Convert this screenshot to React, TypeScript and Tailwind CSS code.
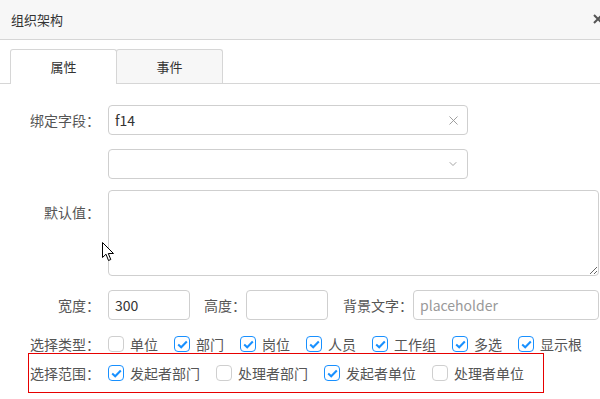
import { X, ChevronDown } from "lucide-react";

const font = { fontFamily: '"Noto Sans CJK SC", "Microsoft YaHei", sans-serif' };

function Check({ label, checked }: { label: string; checked?: boolean }) {
	return (
		<label className="flex items-center mr-[16px] text-[14px] text-[#555] whitespace-nowrap">
			<span
				className={
					checked
						? "w-[16px] h-[16px] rounded-[4px] border border-[#1890ff] flex items-center justify-center bg-white"
						: "w-[16px] h-[16px] rounded-[4px] border border-[#cfcfcf] bg-white"
				}>
				{checked && (
					<svg width="11" height="9" viewBox="0 0 11 9">
						<path d="M1.2 4.5 L4.2 7.3 L9.8 1.5" fill="none" stroke="#1890ff" strokeWidth="2" />
					</svg>
				)}
			</span>
			<span className="ml-[6px] leading-none">{label}</span>
		</label>
	);
}

export default function App() {
	return (
		<div className="relative w-[600px] h-[399px] bg-white overflow-hidden" style={font}>
			{/* header */}
			<div className="h-[40px] bg-[#f7f7f7] border-b border-[#d6d6d6] flex items-center pl-[11px]">
				<span className="text-[13px] text-[#333]">组织架构</span>
			</div>
			<svg className="absolute left-[593px] top-[14px]" width="10" height="10" viewBox="0 0 10 10">
				<path d="M1 1 L9 9 M9 1 L1 9" stroke="#555" strokeWidth="2" />
			</svg>

			{/* tabs */}
			<div className="pt-[9px] pl-[10px] border-b border-[#d6d6d6] flex">
				<div className="w-[107px] h-[35px] -mb-px bg-white border border-b-0 border-[#d6d6d6] rounded-t-[3px] flex items-center justify-center text-[13px] text-[#333]">
					属性
				</div>
				<div className="w-[107px] h-[34px] -ml-px bg-[#f7f7f7] border border-b-0 border-[#d6d6d6] rounded-t-[3px] flex items-center justify-center text-[13px] text-[#333]">
					事件
				</div>
			</div>

			{/* form */}
			<div className="flex flex-col pt-[21px]">
				<div className="flex items-center">
					<span className="w-[100px] text-right text-[14px] text-[#555]">绑定字段：</span>
					<div className="ml-[8px] w-[360px] h-[30px] border border-[#cfcfcf] rounded-[4px] flex items-center px-[6px]">
						<span className="flex-1 text-[14px] text-[#333]">f14</span>
						<X size={15} color="#999" strokeWidth={1.5} />
					</div>
				</div>

				<div className="flex items-center mt-[14px]">
					<div className="ml-[108px] w-[360px] h-[30px] border border-[#cfcfcf] rounded-[4px] flex items-center justify-end px-[8px]">
						<ChevronDown size={12} color="#999" strokeWidth={1.8} />
					</div>
				</div>

				<div className="flex items-start mt-[11px]">
					<span className="w-[100px] text-right text-[14px] text-[#555] mt-[12px]">默认值：</span>
					<textarea
						readOnly
						className="ml-[8px] w-[491px] h-[86px] border border-[#cfcfcf] rounded-[4px] outline-none"
					/>
				</div>

				<div className="flex items-center mt-[14px]">
					<span className="w-[100px] text-right text-[14px] text-[#555]">宽度：</span>
					<div className="ml-[8px] w-[82px] h-[30px] border border-[#cfcfcf] rounded-[4px] flex items-center px-[6px] text-[14px] text-[#333]">
						300
					</div>
					<span className="ml-[14px] text-[14px] text-[#555]">高度：</span>
					<div className="w-[82px] h-[30px] border border-[#cfcfcf] rounded-[4px]" />
					<span className="ml-[15px] text-[14px] text-[#555]">背景文字：</span>
					<div className="w-[186px] h-[30px] border border-[#cfcfcf] rounded-[4px] flex items-center px-[6px] text-[14px] text-[#999]">
						placeholder
					</div>
				</div>

				<div className="flex items-center mt-[15px] h-[18px]">
					<span className="w-[100px] text-right text-[14px] text-[#555]">选择类型：</span>
					<div className="ml-[8px] flex items-center">
						<Check label="单位" />
						<Check label="部门" checked />
						<Check label="岗位" checked />
						<Check label="人员" checked />
						<Check label="工作组" checked />
						<Check label="多选" checked />
						<Check label="显示根" checked />
					</div>
				</div>

				<div className="ml-[28px] w-[516px] h-[40px] border border-[#e60000] flex items-center">
					<span className="w-[71px] text-right text-[14px] text-[#555]">选择范围：</span>
					<div className="ml-[8px] flex items-center">
						<Check label="发起者部门" checked />
						<Check label="处理者部门" />
						<Check label="发起者单位" checked />
						<Check label="处理者单位" />
					</div>
				</div>
			</div>

			{/* mouse pointer */}
			<svg className="absolute left-[102px] top-[242px]" width="13" height="20" viewBox="0 0 13 20">
				<path d="M0.5 0.5 L0.5 15.5 L4 12.2 L6.5 18.5 L8.8 17.5 L6.3 11.5 L11.5 11.5 Z" fill="#fff" stroke="#000" strokeWidth="1" />
			</svg>
		</div>
	);
}
